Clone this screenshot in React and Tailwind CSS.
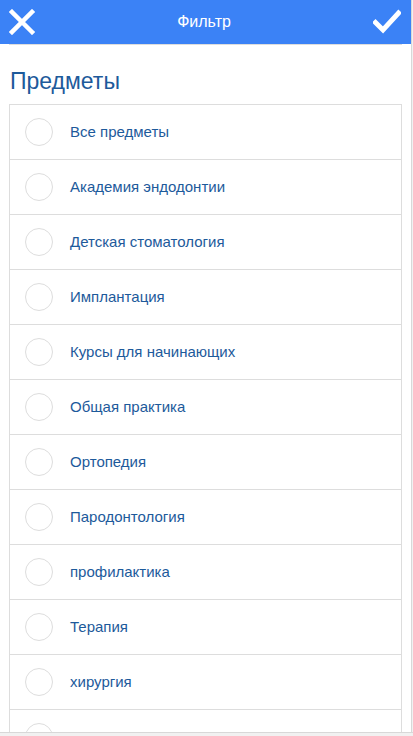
const subjects = [
  'Все предметы',
  'Академия эндодонтии',
  'Детская стоматология',
  'Имплантация',
  'Курсы для начинающих',
  'Общая практика',
  'Ортопедия',
  'Пародонтология',
  'профилактика',
  'Терапия',
  'хирургия',
  'Эстетика',
];

const CloseIcon = () => (
  <svg width="26" height="26" viewBox="0 0 26 26">
    <path d="M3 3 L23 23 M23 3 L3 23" stroke="white" strokeWidth="4.5" strokeLinecap="square" />
  </svg>
);

const CheckIcon = () => (
  <svg width="28" height="26" viewBox="0 0 28 26">
    <path d="M2.5 13.5 L10 21 L25.5 4" stroke="white" strokeWidth="5" fill="none" strokeLinecap="square" />
  </svg>
);

const SubjectRow = ({ label }) => (
  <div className="flex h-[55px] items-center border-b border-[#dddddd]">
    <div className="ml-[15px] h-[28px] w-[28px] rounded-full border border-[#dddddd] bg-white" />
    <span className="ml-[17px] text-[15px] text-[#1d5a9b]">{label}</span>
  </div>
);

export default function App() {
  return (
    <div className="flex h-[736px] w-[413px] flex-col overflow-hidden bg-[#f1f1f1] font-['Liberation_Sans',Arial,sans-serif]">
      <div className="flex min-h-0 flex-1">
        <div className="flex w-[411px] flex-col overflow-hidden bg-white">
          <header className="flex h-[44px] shrink-0 items-center justify-between bg-[#3b82f6] pl-[9px] pr-[10px]">
            <CloseIcon />
            <span className="text-[16px] text-white">Фильтр</span>
            <CheckIcon />
          </header>
          <div className="mx-[9px] h-[2px] border-b border-[#dddddd]" />
          <h1 className="ml-[10px] mt-[21px] text-[23px] leading-[30px] text-[#1d5a9b]">Предметы</h1>
          <div className="mx-[9px] mt-[8px] border-x border-t border-[#dddddd]">
            {subjects.map((s) => (
              <SubjectRow key={s} label={s} />
            ))}
          </div>
        </div>
        <div className="w-[2px] border-l border-[#d8d8d8]" />
      </div>
      <div className="h-[4px] shrink-0 border-t border-[#d8d8d8] bg-[#f1f1f1]" />
    </div>
  );
}
